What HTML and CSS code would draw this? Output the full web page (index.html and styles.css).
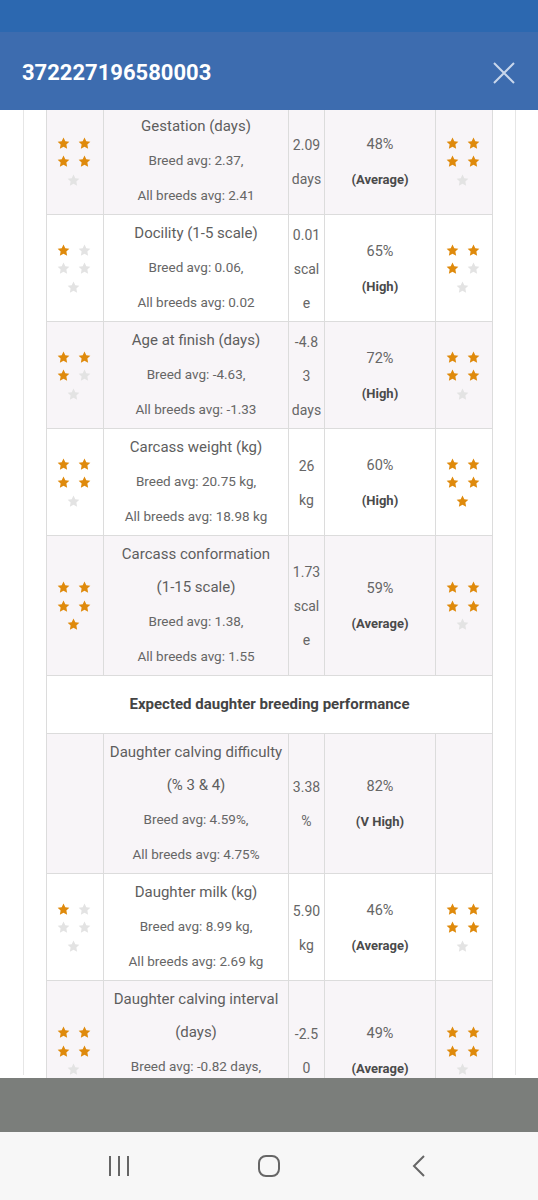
FILE: index.html
```html
<!DOCTYPE html>
<html>
<head>
    <title>372227196580003</title>
    <link rel="stylesheet" href="styles.css">
</head>
<body>
    <div class="statusbar"></div>
    <div class="header">
        <h1>372227196580003</h1>
        <svg class="close" width="22" height="22" viewBox="0 0 22 22">
            <path d="M1 1L21 21M21 1L1 21" stroke="#c9d7ec" stroke-width="2" fill="none"/>
        </svg>
    </div>

    <div class="content">
        <div class="panel">
            <table class="traits">
                <colgroup>
                    <col class="c-stars">
                    <col class="c-desc">
                    <col class="c-val">
                    <col class="c-rel">
                    <col class="c-stars">
                </colgroup>
                <tbody id="trait-body"></tbody>
            </table>
        </div>
    </div>

    <div class="snackbar"></div>
    <div class="navbar">
        <div class="nav-item">
            <svg width="24" height="22" viewBox="0 0 24 22">
                <path d="M3 1V21M12 1V21M21 1V21" stroke="#666" stroke-width="2" fill="none"/>
            </svg>
        </div>
        <div class="nav-item">
            <svg width="22" height="22" viewBox="0 0 22 22">
                <rect x="1" y="1" width="20" height="20" rx="7" stroke="#666" stroke-width="2" fill="none"/>
            </svg>
        </div>
        <div class="nav-item">
            <svg width="14" height="22" viewBox="0 0 14 22">
                <path d="M12 1L2 11L12 21" stroke="#666" stroke-width="2" fill="none"/>
            </svg>
        </div>
    </div>

    <script>
        const traits = [
            { name: "Gestation (days)", breed: "2.37,", all: "2.41", value: "2.09 days", rel: "48%", band: "(Average)", left: 4, right: 4 },
            { name: "Docility (1-5 scale)", breed: "0.06,", all: "0.02", value: "0.01 scale", rel: "65%", band: "(High)", left: 1, right: 3 },
            { name: "Age at finish (days)", breed: "-4.63,", all: "-1.33", value: "-4.83 days", rel: "72%", band: "(High)", left: 3, right: 4 },
            { name: "Carcass weight (kg)", breed: "20.75 kg,", all: "18.98 kg", value: "26 kg", rel: "60%", band: "(High)", left: 4, right: 5 },
            { name: 'Carcass conformation <span class="nw">(1-15 scale)</span>', breed: "1.38,", all: "1.55", value: "1.73 scale", rel: "59%", band: "(Average)", left: 5, right: 4 },
            { heading: "Expected daughter breeding performance" },
            { name: "Daughter calving difficulty (% 3 & 4)", breed: "4.59%,", all: "4.75%", value: "3.38 %", rel: "82%", band: "(V High)", left: 0, right: 0 },
            { name: "Daughter milk (kg)", breed: "8.99 kg,", all: "2.69 kg", value: "5.90 kg", rel: "46%", band: "(Average)", left: 1, right: 4 },
            { name: "Daughter calving interval (days)", breed: "-0.82 days,", all: "-0.14 days", value: "-2.50", rel: "49%", band: "(Average)", left: 4, right: 4 }
        ];

        const starPath = "M12 1l3.3 6.9 7.5.9-5.5 5.2 1.4 7.5L12 17.8l-6.7 3.7 1.4-7.5-5.5-5.2 7.5-.9z";

        function stars(count) {
            if (count === 0) return "";
            let html = '<div class="stars">';
            for (let i = 0; i < 5; i++) {
                const cls = i < count ? "star on" : "star";
                html += `<svg class="${cls}" width="13" height="13" viewBox="0 0 24 24"><path d="${starPath}"/></svg>`;
            }
            return html + "</div>";
        }

        const body = document.getElementById("trait-body");
        traits.forEach(t => {
            const row = body.insertRow();
            if (t.heading) {
                row.innerHTML = `<td colspan="5" class="heading">${t.heading}</td>`;
                return;
            }
            row.innerHTML = `
                <td class="star-cell">${stars(t.left)}</td>
                <td class="desc">
                    <div class="trait-name">${t.name}</div>
                    <div class="avg">Breed avg: ${t.breed}</div>
                    <div class="avg">All breeds avg: ${t.all}</div>
                </td>
                <td class="val">${t.value}</td>
                <td class="rel">
                    <div class="pct">${t.rel}</div>
                    <div class="band">${t.band}</div>
                </td>
                <td class="star-cell">${stars(t.right)}</td>
            `;
        });
    </script>
</body>
</html>
```

FILE: styles.css
```css
body {
    margin: 0;
    font-family: Roboto, "Liberation Sans", sans-serif;
    background: #fff;
    width: 538px;
    height: 1200px;
    overflow: hidden;
}

.statusbar {
    height: 32px;
    background-color: #2c68b0;
}

.header {
    height: 78px;
    background-color: #3d6caf;
    display: flex;
    align-items: center;
    justify-content: space-between;
    padding: 3px 23px 0 22px;
    box-sizing: border-box;
}

.header h1 {
    margin: 0;
    color: #fff;
    font-size: 22px;
    font-weight: bold;
}

.content {
    height: 968px;
    overflow: hidden;
}

.panel {
    margin: 0 22px 0 23px;
    padding: 0 24px 0 22px;
    border-left: 1px solid #e6e6e6;
    border-right: 1px solid #e6e6e6;
    height: 100%;
}

table.traits {
    width: 445px;
    margin-top: -3px;
    table-layout: fixed;
    border-collapse: collapse;
    color: #666;
}

.c-stars { width: 57px; }
.c-desc { width: 185px; }
.c-val { width: 36px; }
.c-rel { width: 111px; }

.traits td {
    border: 1px solid #dcdcdc;
    padding: 2px 2px 1px;
    text-align: center;
    vertical-align: middle;
    line-height: 35px;
}

.traits td.star-cell {
    padding-right: 5px;
}

.traits tr:nth-child(odd) td {
    background-color: #f8f5f8;
}

.trait-name {
    font-size: 15px;
    line-height: 33px;
    color: #5e5e5e;
}

.nw {
    white-space: nowrap;
}

.avg {
    font-size: 13.5px;
}

.traits td.val {
    font-size: 14px;
    line-height: 34px;
    overflow-wrap: anywhere;
}

.pct {
    font-size: 14.5px;
}

.band {
    font-size: 13px;
    font-weight: bold;
    color: #4a4a4a;
}

.traits td.heading {
    padding: 11px 0;
    font-size: 15px;
    font-weight: bold;
    color: #444;
}

.stars {
    width: 34px;
    margin: 0 auto;
    display: flex;
    flex-wrap: wrap;
    justify-content: center;
    column-gap: 8px;
    row-gap: 5.5px;
}

.star {
    display: block;
    fill: #e3e3e3;
}

.star.on {
    fill: #df8a0c;
}

.snackbar {
    height: 54px;
    background-color: #7b7e7b;
}

.navbar {
    height: 68px;
    background-color: #f7f7f7;
    display: flex;
    justify-content: center;
    align-items: center;
}

.nav-item {
    width: 150px;
    display: flex;
    justify-content: center;
}

.nav-item svg {
    display: block;
}
```
